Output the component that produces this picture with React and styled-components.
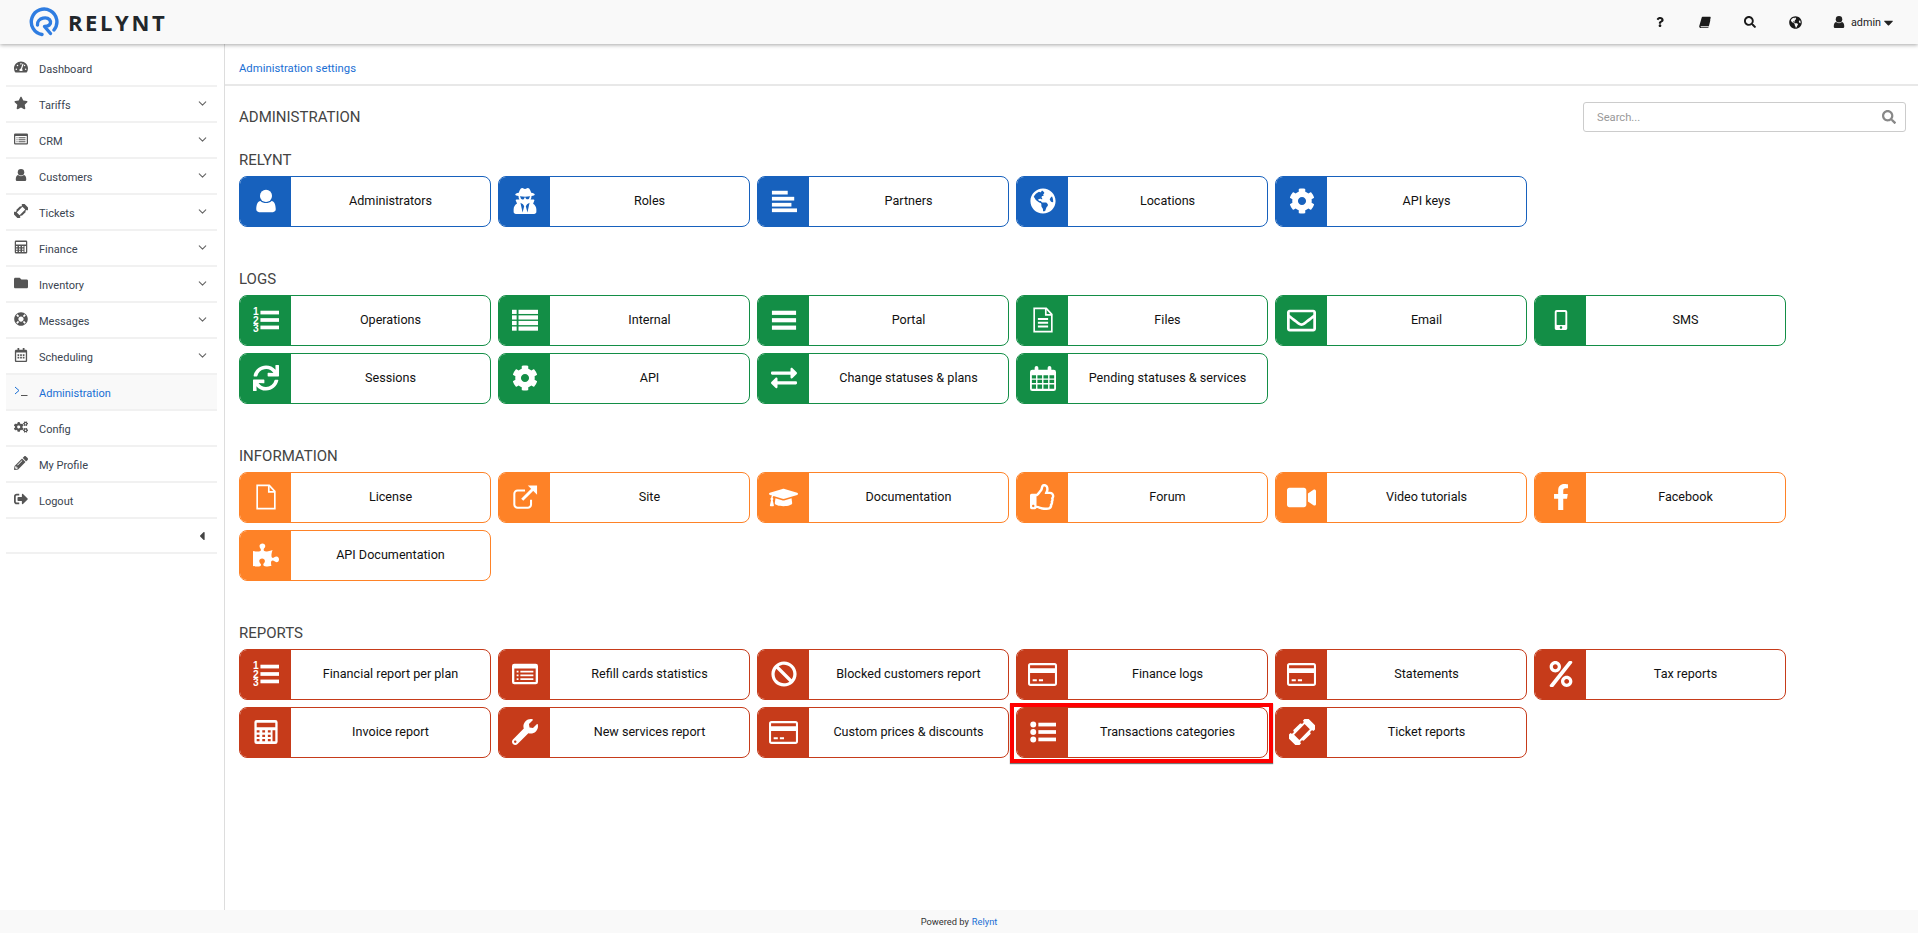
import React from "react";
import styled, { createGlobalStyle } from "styled-components";
import {
  FaUserSecret, FaGlobeAmericas, FaCog, FaRegEnvelope, FaMobileAlt, FaSync, FaExchangeAlt,
  FaGraduationCap, FaRegThumbsUp, FaVideo, FaFacebookF, FaPuzzlePiece, FaBan, FaPercent, FaWrench,
  FaTachometerAlt, FaStar, FaFolder, FaLifeRing, FaCogs, FaPencilAlt, FaSignOutAlt,
  FaCaretLeft, FaCaretDown, FaQuestion, FaSearch, FaRegCalendarAlt,
} from "react-icons/fa";
import { FiChevronDown } from "react-icons/fi";

const Global = createGlobalStyle`
  html, body { margin: 0; padding: 0; height: 100%; overflow: hidden; background: #fff; }
  body { font-family: Roboto, "Liberation Sans", Arial, sans-serif; font-size: 12px; color: #333; }
  * { box-sizing: border-box; }
`;

const Page = styled.div`display: flex; flex-direction: column; height: 933px;`;

const Header = styled.header`
  flex: 0 0 44px; height: 44px; background: #f9f9f9; display: flex; align-items: center;
  justify-content: space-between; padding: 0 22px 0 29px; box-shadow: 0 1px 4px rgba(0,0,0,.35);
  position: relative; z-index: 2;
`;
const Logo = styled.div`display: flex; align-items: center; gap: 9px;`;
const LogoText = styled.span`
  font-family: "Open Sans", sans-serif; font-weight: 700; font-size: 22px; letter-spacing: 2.6px; color: #22272b; line-height: 1;
`;
const TopNav = styled.nav`display: flex; align-items: center; color: #1a1a1a;`;
const TopIcon = styled.span`
  display: flex; width: 45px; justify-content: center; font-size: ${p => p.$size || 12}px;
`;
const UserMenu = styled.span`display: flex; align-items: center; margin-left: 14px; font-size: 10.8px; color: #222;
  svg { display: block; }
`;
const UserIcon = styled.span`display: flex; font-size: 14px;`;
const CaretIcon = styled.span`display: flex; font-size: 15px;`;
const UserName = styled.span`margin: 0 0 0 5px;`;

const Body = styled.div`flex: 1; display: flex; min-height: 0;`;
const Sidebar = styled.aside`
  flex: 0 0 225px; border-right: 1px solid #ddd; padding: 7px 7px 0 6px;
`;
const SideRow = styled.div`
  height: 36px; display: flex; align-items: center; border-bottom: 2px solid #f1f1f1;
  padding: 2px 8px 0 8px; background: ${p => (p.$active ? "#f9f9f9" : "transparent")};
  color: ${p => (p.$active ? "#1a6fd4" : "#3a4450")};
`;
const SideIcon = styled.span`
  width: 14px; display: flex; justify-content: center; margin-right: 11px; font-size: 14px;
  position: relative; top: -2px; color: #555;
`;
const SideLabel = styled.span`flex: 1; font-size: 11px; line-height: 1;`;
const Chevron = styled.span`display: flex; color: #666; font-size: 13px; position: relative; top: -2px;`;
const CollapseRow = styled(SideRow)`justify-content: flex-end; height: 35px; padding-right: 8px; padding-top: 0; color: #444; font-size: 14px;`;

const Main = styled.main`flex: 1; min-width: 0;`;
const Breadcrumb = styled.div`
  height: 42px; border-bottom: 2px solid #e8e8e8; display: flex; align-items: center; padding: 8px 0 0 14px;
  color: #1a6fd4; font-size: 11.3px;
`;
const Content = styled.div`padding: 0 12px 0 14px;`;
const TitleBar = styled.div`display: flex; justify-content: space-between; align-items: center; height: 30px; margin: 16px 0 20px;`;
const PageTitle = styled.h1`margin: 0; font-weight: 400; font-size: 15px; color: #444;`;
const SearchBox = styled.div`
  width: 323px; height: 30px; border: 1px solid #ccc; border-radius: 3px; display: flex; align-items: center;
  justify-content: space-between; padding: 0 9px 0 11px; color: #888; font-size: 14px;
`;
const SearchInput = styled.input`
  border: 0; outline: 0; flex: 1; font: 400 11.2px Roboto, sans-serif; background: transparent; color: #333;
  &::placeholder { color: #999; }
`;
const Section = styled.section`margin-bottom: 44.2px;`;
const SectionTitle = styled.h2`margin: 0 0 7px; height: 17px; line-height: 17px; font-weight: 400; font-size: 15px; color: #444;`;
const Cards = styled.div`display: flex; flex-wrap: wrap; gap: 7.2px 7px;`;
const Card = styled.a`
  position: relative; width: 252px; height: 50.8px; border: 1px solid ${p => p.$color}; border-radius: 8px;
  display: flex; color: #111; font-size: 12.6px; background: #fff;
  ${p => p.$marked ? `&::after { content: ""; position: absolute; left: -7px; right: -6px; top: -5px; bottom: -6px;
    border: 4px solid #f00; box-shadow: 0 1px 1px #777; pointer-events: none; }` : ""}
`;
const CardIcon = styled.span`
  flex: 0 0 51px; background: ${p => p.$color}; border-radius: 7px 0 0 7px; color: #fff; font-size: ${p => p.$size || 26}px;
  display: flex; align-items: center; justify-content: center;
`;
const CardLabel = styled.span`flex: 1; display: flex; align-items: center; justify-content: center; padding-bottom: 2px;`;
const Footer = styled.footer`
  flex: 0 0 23px; background: #f9f9f9; display: flex; align-items: center; justify-content: center; font-size: 9.3px; color: #333;
`;
const FootLink = styled.span`color: #1a6fd4; margin-left: 3px;`;

const Svg = ({ children, stroke }) => (
  <svg width="1em" height="1em" viewBox="0 0 28 28" fill={stroke ? "none" : "currentColor"} stroke={stroke ? "currentColor" : "none"} strokeWidth={stroke || undefined}>
    {children}
  </svg>
);

const UserGlyph = () => (
  <Svg>
    <circle cx="14" cy="8.5" r="6.5" />
    <path d="M8 14c3 3 9 3 12 0 3 .5 4.5 4 4.5 9 0 2-1.5 3-3 3h-15c-1.5 0-3-1-3-3 0-5 1.5-8.5 4.5-9z" />
  </Svg>
);
const AlignGlyph = () => (
  <Svg>
    <rect x="1" y="3" width="17" height="4" /><rect x="1" y="9.5" width="24" height="4" />
    <rect x="1" y="16" width="21" height="4" /><rect x="1" y="22" width="27" height="4" />
  </Svg>
);
const OrderedGlyph = () => (
  <Svg>
    <rect x="8" y="4" width="20" height="4" /><rect x="8" y="12" width="20" height="4" /><rect x="8" y="20" width="20" height="4" />
    <text x="0" y="9" fontFamily="Liberation Sans, sans-serif" fontWeight="700" fontSize="11">1</text>
    <text x="0" y="18" fontFamily="Liberation Sans, sans-serif" fontWeight="700" fontSize="11">2</text>
    <text x="0" y="27" fontFamily="Liberation Sans, sans-serif" fontWeight="700" fontSize="11">3</text>
  </Svg>
);
const ListGlyph = () => (
  <Svg>
    {[3, 9, 15, 21].map(y => (
      <g key={y}><rect x="0" y={y} width="5" height="4.5" /><rect x="7" y={y} width="21" height="4.5" /></g>
    ))}
  </Svg>
);
const BarsGlyph = () => (
  <Svg><rect x="1" y="4" width="26" height="4.5" /><rect x="1" y="12" width="26" height="4.5" /><rect x="1" y="20" width="26" height="4.5" /></Svg>
);
const FileGlyph = ({ lines }) => (
  <Svg stroke="1.8">
    <path d="M4.5 1.5h13l6 6.5v18.5h-19z" /><path d="M17 1.5v7h6.5" />
    {lines && <path d="M8.5 13h11M8.5 17h11M8.5 21h11" strokeWidth="2.2" />}
  </Svg>
);
const ShareGlyph = () => (
  <Svg stroke="2.2">
    <path d="M20.5 17v5a3.5 3.5 0 0 1-3.5 3.5H6A3.5 3.5 0 0 1 2.5 22V10.5A3.5 3.5 0 0 1 6 7h8" />
    <path d="M11 17L24 4" strokeWidth="3.2" />
    <path d="M17 1.5h10v10z" fill="currentColor" stroke="none" />
  </Svg>
);
const ListAltGlyph = () => (
  <svg width="1em" height="1em" viewBox="0 0 28 28" fill="currentColor" fillRule="evenodd">
    <path d="M2.5 3h23A2.5 2.5 0 0 1 28 5.5v17a2.5 2.5 0 0 1-2.5 2.5h-23A2.5 2.5 0 0 1 0 22.5v-17A2.5 2.5 0 0 1 2.5 3zM2.5 8v14.5h23V8zM5 10.500h2v2H5zM9 10.5h14v2H9zM5 14.5h2v2H5zM9 14.5h14v2H9zM5 18.5h2v2H5zM9 18.5h14v2H9z" />
  </svg>
);
const CardGlyph = () => (
  <svg width="1em" height="1em" viewBox="0 0 28 28" fill="currentColor" fillRule="evenodd">
    <path d="M2.5 3h23A2.5 2.5 0 0 1 28 5.5v17a2.5 2.5 0 0 1-2.5 2.5h-23A2.5 2.5 0 0 1 0 22.5v-17A2.5 2.5 0 0 1 2.5 3zM2 5v3h24V5zM2 12.5V23h24V12.5zM4.5 18.5h4v2h-4zM10.5 18.5h4v2h-4z" />
  </svg>
);
const CalcGlyph = () => (
  <svg width="1em" height="1em" viewBox="0 0 28 28" fill="currentColor" fillRule="evenodd">
    <path d="M4 1h20a2.5 2.5 0 0 1 2.5 2.5v21a2.5 2.5 0 0 1-2.5 2.5H4a2.5 2.5 0 0 1-2.5-2.5v-21A2.5 2.5 0 0 1 4 1zM4 4v5h20V4zM4 12v2.5h3V12zM10 12v2.5h3V12zM16 12v2.5h3V12zM21 12v12h3V12zM4 17v2.5h3V17zM10 17v2.5h3V17zM16 17v2.5h3V17zM4 21.5V24h3v-2.5zM10 21.5V24h3v-2.5zM16 21.5V24h3v-2.5z" />
  </svg>
);
const CalendarGlyph = () => (
  <svg width="1em" height="1em" viewBox="0 0 28 28" fill="currentColor" fillRule="evenodd">
    <path d="M7 1a2 2 0 0 1 2 2v2h10V3a2 2 0 1 1 4 0v2h2.5A2.5 2.5 0 0 1 28 7.5v18a2.5 2.5 0 0 1-2.5 2.5h-23A2.5 2.5 0 0 1 0 25.5v-18A2.5 2.5 0 0 1 2.5 5H5V3a2 2 0 0 1 2-2zM2 11v3.5h4.5V11zM8 11v3.5h5V11zM14.5 11v3.5h5V11zM21 11v3.5h5V11zM2 16v3.5h4.5V16zM8 16v3.5h5V16zM14.5 16v3.5h5V16zM21 16v3.5h5V16zM2 21v4.5h4.5V21zM8 21v4.5h5V21zM14.5 21v4.5h5V21zM21 21v4.5h5V21z" />
  </svg>
);
const BulletGlyph = () => (
  <Svg>
    <circle cx="3.5" cy="6" r="3.2" /><circle cx="3.5" cy="14" r="3.2" /><circle cx="3.5" cy="22" r="3.2" />
    <rect x="9" y="4" width="19" height="4" /><rect x="9" y="12" width="19" height="4" /><rect x="9" y="20" width="19" height="4" />
  </Svg>
);
const TicketGlyph = () => (
  <svg width="1em" height="1em" viewBox="0 0 28 28" fill="currentColor" fillRule="evenodd">
    <path transform="rotate(45 14 14)" d="M6 -1h16v5.5a2 2 0 0 0 0 4v11a2 2 0 0 0 0 4V29H6v-5.5a2 2 0 0 0 0-4v-11a2 2 0 0 0 0-4zM10 6v16h8V6z" />
  </svg>
);
const BookGlyph = () => (
  <Svg>
    <path d="M9 2h17c1 0 1.5 1 1.2 2L23 22c-.3 1-1 2-2.5 2H5c-1 0-1.5.5-1.5 1s.5 1 1.5 1h17l.8-3L25 9l1.5 1-4 16.5c-.2.7-.8 1.5-2 1.5H4c-2 0-3.5-1.5-3.5-3.5 0-.5 0-1 .3-1.500L6 4.5C6.3 3 7.5 2 9 2z" />
  </Svg>
);
const TerminalGlyph = () => (
  <Svg stroke="2">
    <path d="M2 6l8 7-8 7" stroke="#1a6fd4" /><path d="M14 23h13" />
  </Svg>
);

const BLUE = "#1761bd", GREEN = "#138e46", ORANGE = "#fe8227", RED = "#c63b1a";

const sections = [
  { title: "RELYNT", color: BLUE, items: [
    ["Administrators", UserGlyph], ["Roles", FaUserSecret], ["Partners", AlignGlyph], ["Locations", FaGlobeAmericas], ["API keys", FaCog],
  ]},
  { title: "LOGS", color: GREEN, items: [
    ["Operations", OrderedGlyph], ["Internal", ListGlyph], ["Portal", BarsGlyph], ["Files", () => <FileGlyph lines />], ["Email", FaRegEnvelope, 0, 29], ["SMS", FaMobileAlt, 0, 20],
    ["Sessions", FaSync], ["API", FaCog], ["Change statuses & plans", FaExchangeAlt], ["Pending statuses & services", CalendarGlyph],
  ]},
  { title: "INFORMATION", color: ORANGE, items: [
    ["License", () => <FileGlyph />], ["Site", ShareGlyph], ["Documentation", FaGraduationCap, 0, 29], ["Forum", FaRegThumbsUp], ["Video tutorials", FaVideo, 0, 29], ["Facebook", FaFacebookF],
    ["API Documentation", FaPuzzlePiece],
  ]},
  { title: "REPORTS", color: RED, items: [
    ["Financial report per plan", OrderedGlyph], ["Refill cards statistics", ListAltGlyph], ["Blocked customers report", FaBan], ["Finance logs", CardGlyph, 0, 29], ["Statements", CardGlyph, 0, 29], ["Tax reports", FaPercent],
    ["Invoice report", CalcGlyph], ["New services report", FaWrench], ["Custom prices & discounts", CardGlyph, 0, 29], ["Transactions categories", BulletGlyph, true], ["Ticket reports", TicketGlyph],
  ]},
];

const menu = [
  ["Dashboard", FaTachometerAlt], ["Tariffs", FaStar, 1], ["CRM", ListAltGlyph, 1], ["Customers", UserGlyph, 1], ["Tickets", TicketGlyph, 1],
  ["Finance", CalcGlyph, 1], ["Inventory", FaFolder, 1], ["Messages", FaLifeRing, 1], ["Scheduling", FaRegCalendarAlt, 1],
  ["Administration", TerminalGlyph, 0, true], ["Config", FaCogs], ["My Profile", FaPencilAlt], ["Logout", FaSignOutAlt],
];

const LogoMark = () => (
  <svg width="30" height="30" viewBox="0 0 30 30" fill="none" stroke="#2f7de1" strokeWidth="3.4" strokeLinecap="round" strokeLinejoin="round">
    <path d="M13 27.500A12.800 12.800 0 1 1 25 23" />
    <path d="M8.500 18C7.500 11 20 8 21.500 14.500c.6 3-2 5-6 5l6 7" />
  </svg>
);

export default function App() {
  return (
    <Page>
      <Global />
      <Header>
        <Logo>
          <LogoMark />
          <LogoText>RELYNT</LogoText>
        </Logo>
        <TopNav>
          <TopIcon $size={10}><FaQuestion /></TopIcon>
          <TopIcon><BookGlyph /></TopIcon>
          <TopIcon><FaSearch /></TopIcon>
          <TopIcon $size={13}><FaGlobeAmericas /></TopIcon>
          <UserMenu><UserIcon><UserGlyph /></UserIcon><UserName>admin</UserName><CaretIcon><FaCaretDown /></CaretIcon></UserMenu>
        </TopNav>
      </Header>
      <Body>
        <Sidebar>
          {menu.map(([label, Icon, more, active]) => (
            <SideRow key={label} $active={active}>
              <SideIcon><Icon /></SideIcon>
              <SideLabel>{label}</SideLabel>
              {more ? <Chevron><FiChevronDown /></Chevron> : null}
            </SideRow>
          ))}
          <CollapseRow><FaCaretLeft /></CollapseRow>
        </Sidebar>
        <Main>
          <Breadcrumb>Administration settings</Breadcrumb>
          <Content>
            <TitleBar>
              <PageTitle>ADMINISTRATION</PageTitle>
              <SearchBox>
                <SearchInput placeholder="Search..." />
                <FaSearch />
              </SearchBox>
            </TitleBar>
            {sections.map(s => (
              <Section key={s.title}>
                <SectionTitle>{s.title}</SectionTitle>
                <Cards>
                  {s.items.map(([label, Icon, marked, size]) => (
                    <Card key={label} $color={s.color} $marked={marked}>
                      <CardIcon $color={s.color} $size={size}><Icon /></CardIcon>
                      <CardLabel>{label}</CardLabel>
                    </Card>
                  ))}
                </Cards>
              </Section>
            ))}
          </Content>
        </Main>
      </Body>
      <Footer>Powered by <FootLink>Relynt</FootLink></Footer>
    </Page>
  );
}
